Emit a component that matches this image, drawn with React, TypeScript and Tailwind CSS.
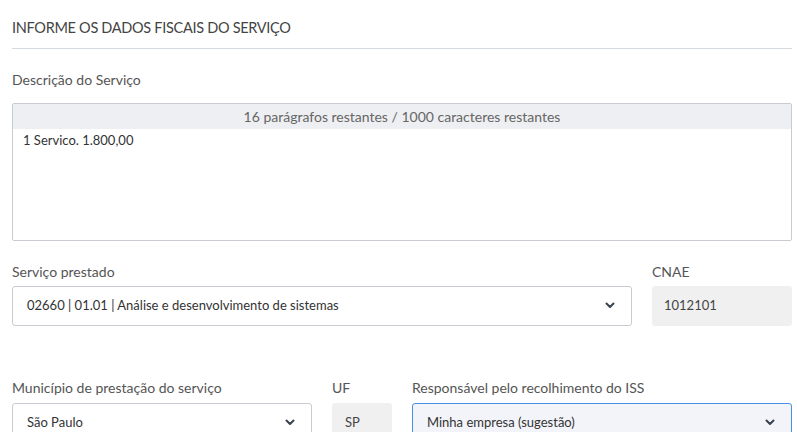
import React from "react";

const Chev = () => (
  <svg width="10" height="7" viewBox="0 0 10 7"><path d="M1.5 1.5 L5 5 L8.5 1.5" fill="none" stroke="#3a4150" strokeWidth="2" strokeLinecap="round" strokeLinejoin="round"/></svg>
);

export default function App() {
  return (
    <div className="w-[797px] h-[432px] overflow-hidden bg-white text-[#555] pl-[12px] pr-[5px] pt-[17px]" style={{ fontFamily: "Lato, 'Open Sans', sans-serif" }}>
      <div className="text-[14.5px] text-[#444] tracking-[-0.3px] pb-[9px] border-b border-[#d5d9e0]">INFORME OS DADOS FISCAIS DO SERVIÇO</div>
      <div className="text-[14px] mt-[20px] h-[20px]">Descrição do Serviço</div>
      <div className="mt-[14px] h-[138px] border border-[#c8ccd2] rounded-[2px]">
        <div className="h-[25px] bg-[#eeeff2] text-center text-[14px] leading-[25px] text-[#666]">16 parágrafos restantes / 1000 caracteres restantes</div>
        <div className="px-[10px] pt-[2px] text-[13px] text-[#333]">1 Servico. 1.800,00</div>
      </div>
      <div className="flex gap-[20px] mt-[20px]">
        <div className="flex-1">
          <div className="text-[14px] h-[25px]">Serviço prestado</div>
          <div className="h-[40px] border border-[#c8ccd2] rounded-[3px] flex items-center justify-between pl-[14px] pr-[16px] text-[13px] text-[#333]">
            <span>02660 | 01.01 | Análise e desenvolvimento de sistemas</span><Chev />
          </div>
        </div>
        <div className="w-[140px]">
          <div className="text-[14px] h-[25px]">CNAE</div>
          <div className="h-[40px] bg-[#f0f0f0] rounded-[3px] flex items-center pl-[12px] text-[13px] text-[#444]">1012101</div>
        </div>
      </div>
      <div className="flex gap-[20px] mt-[51px]">
        <div className="w-[300px]">
          <div className="text-[14px] h-[26px]">Município de prestação do serviço</div>
          <div className="h-[40px] border border-[#c8ccd2] rounded-[3px] flex items-center justify-between pl-[14px] pr-[16px] text-[13px] text-[#333]">
            <span>São Paulo</span><Chev />
          </div>
        </div>
        <div className="w-[60px]">
          <div className="text-[14px] h-[26px]">UF</div>
          <div className="h-[40px] bg-[#f0f0f0] rounded-[3px] flex items-center pl-[13px] text-[13px] text-[#444]">SP</div>
        </div>
        <div className="flex-1">
          <div className="text-[14px] h-[26px]">Responsável pelo recolhimento do ISS</div>
          <div className="h-[40px] border border-[#4a90e2] bg-[#f2f4f9] rounded-[3px] flex items-center justify-between pl-[14px] pr-[16px] text-[13px] text-[#333]">
            <span>Minha empresa (sugestão)</span><Chev />
          </div>
        </div>
      </div>
    </div>
  );
}
